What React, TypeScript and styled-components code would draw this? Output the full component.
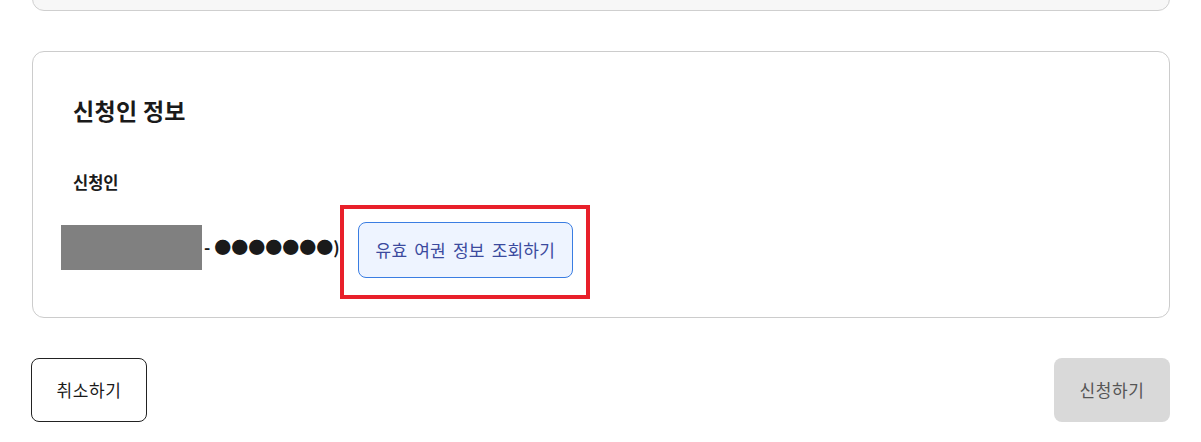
import React from "react";
import styled, { createGlobalStyle } from "styled-components";

const GlobalStyle = createGlobalStyle`
  html, body { margin: 0; padding: 0; background: #ffffff; }
  body {
    font-family: "Liberation Sans", "Noto Sans CJK KR", sans-serif;
    color: #1a1a1a;
    overflow: hidden;
  }
  * { box-sizing: border-box; }
`;

const Page = styled.div`
  width: 1201px;
  height: 442px;
  padding: 0 31px 0 32px;
  display: flex;
  flex-direction: column;
  overflow: hidden;
`;

const PrevCard = styled.div`
  margin-top: -40px;
  height: 51px;
  border: 1px solid #cfcfcf;
  border-radius: 12px;
  background: #f7f7f7;
  flex-shrink: 0;
`;

const Card = styled.section`
  margin-top: 40px;
  border: 1px solid #cccccc;
  border-radius: 12px;
  background: #ffffff;
  padding: 42px 40px 18px 40px;
  display: flex;
  flex-direction: column;
  flex-shrink: 0;
`;

const Heading = styled.h2`
  margin: 0;
  font-family: "Noto Sans CJK KR", sans-serif;
  font-size: 23px;
  line-height: 32px;
  font-weight: 700;
  letter-spacing: 0.3px;
  color: #1a1a1a;
`;

const Label = styled.div`
  margin-top: 44px;
  font-family: "Noto Sans CJK KR", sans-serif;
  font-size: 16.5px;
  line-height: 24px;
  font-weight: 700;
  color: #1a1a1a;
`;

const Row = styled.div`
  margin-top: 11px;
  display: flex;
  align-items: flex-start;
`;

const Redacted = styled.div`
  margin-left: -12px;
  margin-top: 20px;
  width: 141px;
  height: 45px;
  background: #808080;
  flex-shrink: 0;
`;

const Masked = styled.span`
  margin-left: 2px;
  margin-top: 30px;
  font-family: "Noto Sans CJK KR", sans-serif;
  font-size: 17px;
  line-height: 24px;
  font-weight: 700;
  color: #1a1a1a;
  white-space: nowrap;
`;

const Highlight = styled.div`
  margin-left: 0;
  border: 4px solid #e8202a;
  padding: 13px 13px 17px 14px;
`;

const LookupButton = styled.button`
  display: block;
  font-family: "Noto Sans CJK KR", sans-serif;
  font-size: 17px;
  line-height: 24px;
  word-spacing: 3px;
  letter-spacing: 0.2px;
  padding: 15px 17px;
  border: 1px solid #3a7de2;
  border-radius: 8px;
  background: #eef4ff;
  color: #3b4a9e;
  cursor: pointer;
  white-space: nowrap;
`;

const Footer = styled.div`
  margin-top: 40px;
  display: flex;
  justify-content: space-between;
  align-items: center;
`;

const FooterButton = styled.button<{ $variant: "outline" | "disabled" }>`
  width: 116px;
  height: 64px;
  font-family: "Noto Sans CJK KR", sans-serif;
  font-size: 17px;
  line-height: 24px;
  letter-spacing: 0.6px;
  border-radius: 8px;
  padding: 0;
  cursor: pointer;
  border: ${(p) => (p.$variant === "outline" ? "1px solid #222222" : "none")};
  background: ${(p) => (p.$variant === "outline" ? "#ffffff" : "#d9d9d9")};
  color: ${(p) => (p.$variant === "outline" ? "#1a1a1a" : "#555555")};
  margin-left: ${(p) => (p.$variant === "outline" ? "-1px" : "0")};
`;

export default function App() {
  return (
    <>
      <GlobalStyle />
      <Page>
        <PrevCard />
        <Card>
          <Heading>신청인 정보</Heading>
          <Label>신청인</Label>
          <Row>
            <Redacted />
            <Masked>- ●●●●●●●)</Masked>
            <Highlight>
              <LookupButton type="button">유효 여권 정보 조회하기</LookupButton>
            </Highlight>
          </Row>
        </Card>
        <Footer>
          <FooterButton $variant="outline" type="button">취소하기</FooterButton>
          <FooterButton $variant="disabled" type="button" disabled>신청하기</FooterButton>
        </Footer>
      </Page>
    </>
  );
}
